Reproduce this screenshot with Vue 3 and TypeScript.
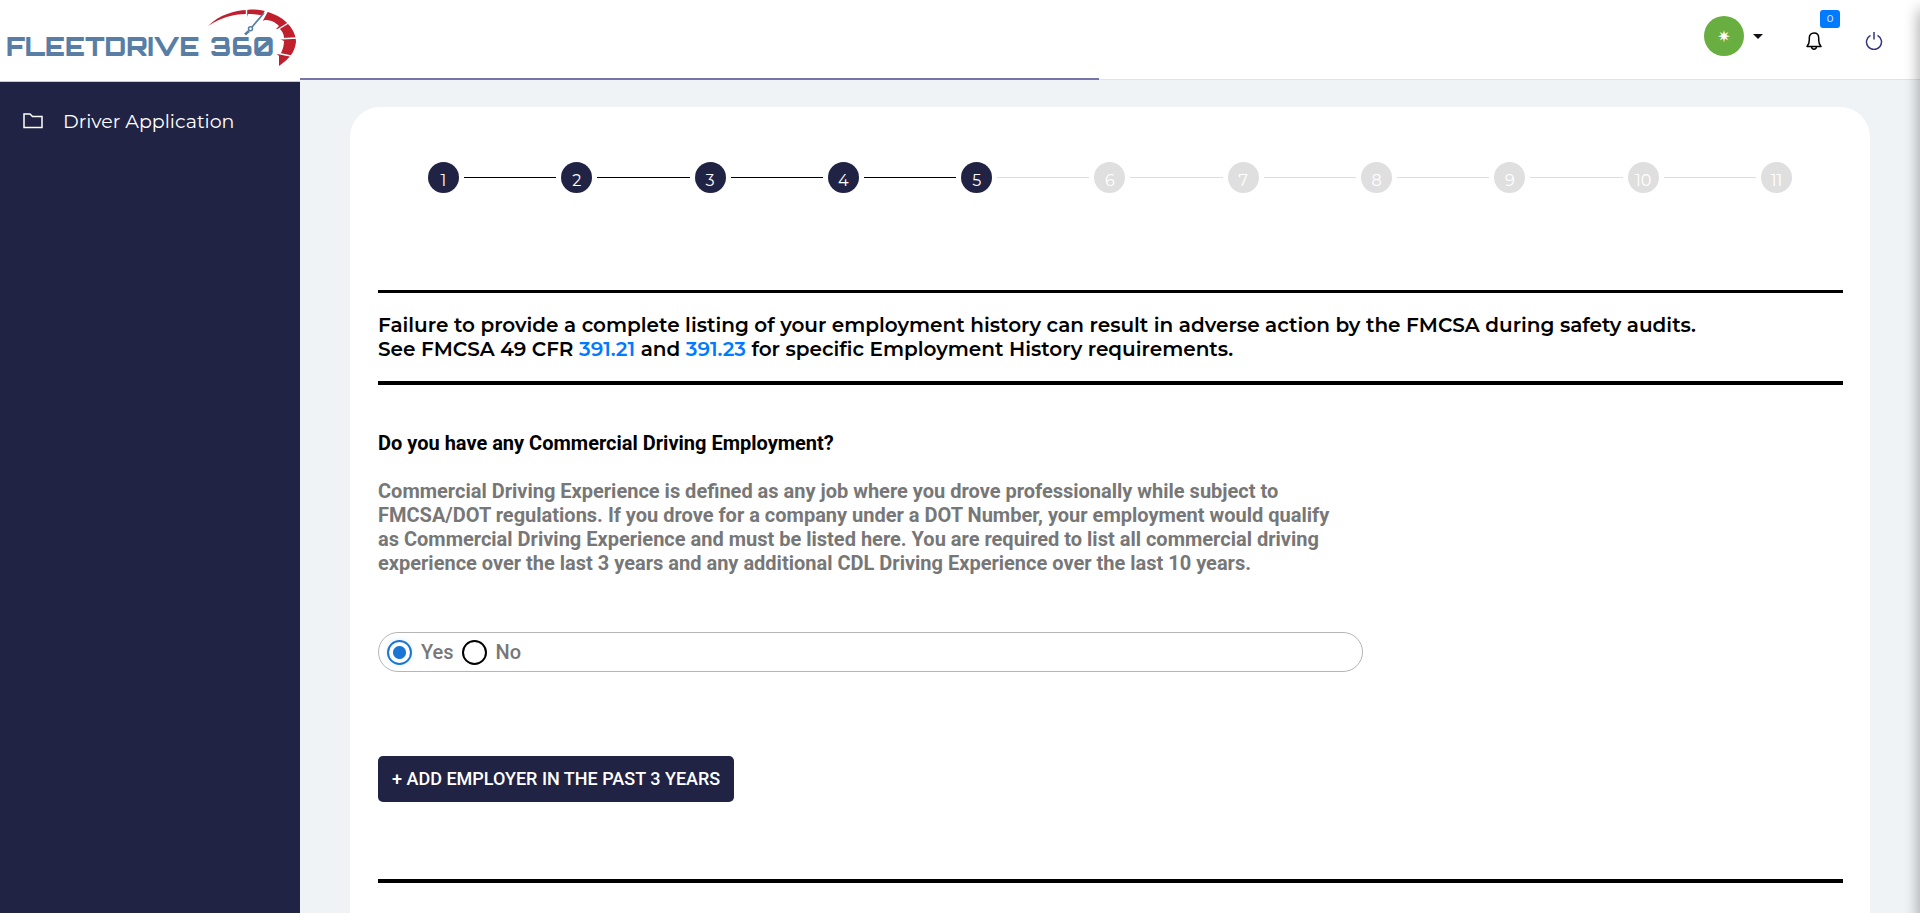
<script setup lang="ts">
import { ref } from 'vue'

const currentStep = 5
const steps: number[] = Array.from({ length: 11 }, (_, i) => i + 1)
const hasCommercialEmployment = ref<'yes' | 'no'>('yes')
</script>

<template>
  <div class="app">
    <aside class="sidebar">
      <a class="brand" href="#" aria-label="FleetDrive 360">
        <svg class="logo" width="300" height="80" viewBox="0 0 300 80">
          <text class="logo-text" x="6" y="56">FLEETDRIVE <tspan x="210">360</tspan></text>
          <path
            fill="#c01f2e"
            d="M208 26C219 15 235 10 247 10C255 9 262 10 268 12C277 15 284 19 288 24C294 30 296 37 296 42C295 52 289 59 279 66L279 56L276 53L281 53C283 49 284 45 284 41L280 39L284 38C284 34 282 31 280 29L276 29L279 26C275 22 271 20 265 20L262 21L263 16C258 14 252 14 248 14L247 17L246 14C233 14 220 18 208 26Z"
          />
          <g stroke="#fff" fill="none">
            <path stroke-width="1.4" d="M246.500 8V17M277 30L290 22M277 39L297 38M276 53L291 56" />
            <path stroke-width="3" d="M261 21L267 10" />
          </g>
          <g stroke="#587ea6" fill="none">
            <path stroke-width="1.700" d="M264 13L252 27" />
            <circle cx="250.500" cy="28.700" r="2" stroke-width="1.500" />
            <path stroke-width="2.600" d="M249 31L245 34.500" />
          </g>
        </svg>
      </a>
      <nav class="menu">
        <a class="menu-item" href="#">
          <svg width="20" height="16" viewBox="0 0 20 16" fill="none" stroke="currentColor" stroke-width="1.500">
            <path d="M1 14.500V1H7L9.500 3.500H19V14.500Z" />
          </svg>
          <span>Driver Application</span>
        </a>
      </nav>
    </aside>

    <div class="page">
      <header class="topbar">
        <button class="account" type="button" aria-label="Account menu">
          <span class="avatar">✷</span>
          <span class="caret"></span>
        </button>
        <button class="bell" type="button" aria-label="Notifications">
          <svg width="16" height="18" viewBox="0 0 16 18" fill="none" stroke="#000" stroke-width="1.500">
            <path stroke-linejoin="round" d="M1 14.500C2.500 13 3.300 11.500 3.300 8V5.800C3.300 2.800 5.300.900 8 .900S12.700 2.800 12.700 5.800V8C12.700 11.500 13.500 13 15 14.500Z" />
            <path d="M5.500 14.700C5.700 16.400 6.600 17.200 8 17.200S10.300 16.400 10.500 14.700" />
          </svg>
          <span class="badge">0</span>
        </button>
        <button class="power" type="button" aria-label="Log out">
          <svg width="18" height="18" viewBox="0 0 18 18" fill="none" stroke="#34347f" stroke-width="1.500">
            <path d="M5.500 3.300A7.500 7.500 0 1 0 12.500 3.300M9 0V7.500" />
          </svg>
        </button>
        <div class="progress"></div>
      </header>

      <main class="content">
        <section class="card">
          <ol class="steps">
            <li
              v-for="step in steps"
              :key="step"
              class="step"
              :class="{ done: step <= currentStep, passed: step <= currentStep && step > 1 }"
            >
              <span class="dot">{{ step }}</span>
            </li>
          </ol>

          <div class="notice">
            <p>
              Failure to provide a complete listing of your employment history can result in adverse action by the
              FMCSA during safety audits.<br />
              See FMCSA 49 CFR <a href="#">391.21</a> and <a href="#">391.23</a> for specific Employment History
              requirements.
            </p>
          </div>

          <div class="row">
            <div class="question">
              <h2 id="question-title">Do you have any Commercial Driving Employment?</h2>
              <p class="help">
                Commercial Driving Experience is defined as any job where you drove professionally while subject to
                FMCSA/DOT regulations. If you drove for a company under a DOT Number, your employment would qualify
                as Commercial Driving Experience and must be listed here. You are required to list all commercial
                driving experience over the last 3 years and any additional CDL Driving Experience over the last 10
                years.
              </p>
              <div class="choices" role="radiogroup" aria-labelledby="question-title">
                <label class="choice">
                  <input v-model="hasCommercialEmployment" type="radio" name="employment" value="yes" />
                  <span>Yes</span>
                </label>
                <label class="choice">
                  <input v-model="hasCommercialEmployment" type="radio" name="employment" value="no" />
                  <span>No</span>
                </label>
              </div>
              <button class="add" type="button">+ ADD EMPLOYER IN THE PAST 3 YEARS</button>
            </div>
          </div>

          <hr class="rule" />
        </section>
      </main>
    </div>
    <div class="edge-shadow"></div>
  </div>
</template>

<style>
html,
body {
  margin: 0;
  height: 100%;
  overflow: hidden;
}
#app {
  height: 100%;
}
</style>

<style scoped>
* {
  box-sizing: border-box;
}
.app {
  display: flex;
  height: 100%;
  overflow: hidden;
  background: #eff3f6;
  font-family: Roboto, 'Liberation Sans', sans-serif;
  color: #000;
}
button {
  border: 0;
  background: none;
  padding: 0;
  font: inherit;
  cursor: pointer;
}
a {
  text-decoration: none;
}

.sidebar {
  flex: 0 0 300px;
  background: #212344;
}
.brand {
  display: block;
  height: 82px;
  background: #fff;
  border-bottom: 1px solid #c9c9d4;
}
.logo {
  display: block;
}
.logo-text {
  font: 900 26px Orbitron, 'DejaVu Sans', sans-serif;
  fill: #587ea6;
}
.menu {
  padding-top: 23px;
}
.menu-item {
  display: flex;
  align-items: center;
  gap: 20px;
  height: 32px;
  padding-left: 23px;
  color: #fff;
  font: 400 19px Montserrat, Inter, sans-serif;
}

.page {
  flex: 1;
  min-width: 0;
}
.topbar {
  position: relative;
  display: flex;
  justify-content: flex-end;
  align-items: flex-start;
  height: 80px;
  padding: 16px 37px 0 0;
  background: #fff;
  border-bottom: 1px solid #dde4ea;
}
.progress {
  position: absolute;
  left: 0;
  bottom: -1px;
  width: 49.3%;
  height: 2px;
  background: #7774ab;
}
.account {
  display: flex;
  align-items: center;
  gap: 9px;
  margin-right: 43px;
}
.avatar {
  display: flex;
  align-items: center;
  justify-content: center;
  width: 40px;
  height: 40px;
  border-radius: 50%;
  background: #69ae40;
  color: #fff;
  font: 700 16px 'DejaVu Sans', sans-serif;
}
.caret {
  border: 5px solid transparent;
  border-top-color: #111;
  border-bottom: 0;
}
.bell {
  position: relative;
  margin: 16px 43px 0 0;
}
.bell svg,
.power svg {
  display: block;
}
.badge {
  position: absolute;
  left: 14px;
  top: -22px;
  width: 20px;
  height: 18px;
  border-radius: 3px;
  background: #007bff;
  color: #fff;
  font: 400 10px/18px Montserrat, Inter, sans-serif;
  text-align: center;
}
.power {
  margin-top: 16px;
}

.content {
  padding: 27px 50px 0;
}
.card {
  min-height: 100vh;
  border-radius: 30px;
  background: #fff;
  padding-top: 55px;
}
.steps {
  display: flex;
  list-style: none;
  margin: 0 78px 97px;
  padding: 0;
}
.step {
  display: flex;
  align-items: center;
  flex: 1;
}
.step:first-child {
  flex: none;
}
.step:not(:first-child)::before {
  content: '';
  flex: 1;
  height: 1px;
  margin: 0 5px;
  background: #dedede;
}
.step.passed::before {
  background: #000;
}
.dot {
  width: 31px;
  height: 31px;
  border-radius: 50%;
  padding-top: 5px;
  background: #dfdfdf;
  color: #fff;
  font: 400 16px/28px Montserrat, Inter, sans-serif;
  text-align: center;
}
.done .dot {
  background: #212344;
}

.notice {
  margin: 0 27px 0 28px;
  border-top: 3px solid #000;
  border-bottom: 4px solid #000;
  padding: 20px 0;
  font: 600 20px/24px Montserrat, Inter, sans-serif;
}
.notice p {
  margin: 0;
}
.notice a {
  color: #007bff;
}

.row {
  display: grid;
  grid-template-columns: 2fr 1fr;
}
.question {
  padding: 46px 0 77px 28px;
}
h2,
.help {
  margin: 0;
  font-size: 20px;
  line-height: 24px;
  font-weight: 700;
}
.help {
  margin-top: 24px;
  padding-right: 16px;
  color: #777;
}
.choices {
  display: flex;
  gap: 8px;
  height: 40px;
  margin: 57px 0 84px;
  padding-left: 8px;
  border: 1px solid #b5b5b5;
  border-radius: 20px;
}
.choice {
  display: flex;
  align-items: center;
  gap: 9px;
  color: #777;
  font-weight: 500;
  font-size: 20px;
  line-height: 24px;
}
.choice input {
  appearance: none;
  width: 25px;
  height: 25px;
  margin: 0;
  border: 2px solid #000;
  border-radius: 50%;
}
.choice input:checked {
  border-color: #1976d2;
  background: radial-gradient(circle, #1976d2 6px, #fff 7px);
  box-shadow: 0 0 4px 2px #f0f6fd;
}
.add {
  display: block;
  height: 46px;
  padding: 0 14px 2px;
  border-radius: 5px;
  background: #212344;
  color: #fff;
  font-weight: 500;
  font-size: 18px;
}
.rule {
  height: 4px;
  margin: 0 27px 0 28px;
  border: 0;
  background: #000;
}

.edge-shadow {
  position: fixed;
  top: 10px;
  right: -10px;
  bottom: -10px;
  width: 10px;
  box-shadow: 0 0 15px rgba(0, 0, 0, 0.45);
}
</style>
